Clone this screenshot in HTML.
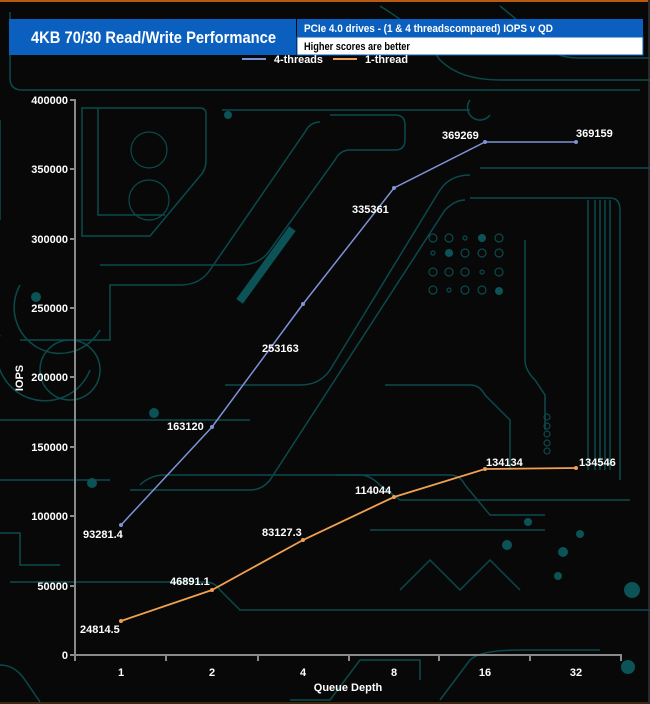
<!DOCTYPE html>
<html><head><meta charset="utf-8"><style>
html,body{margin:0;padding:0;background:#000}
svg{display:block}
text{font-family:"Liberation Sans",sans-serif;font-weight:bold}
</style></head><body>
<svg width="650" height="704" viewBox="0 0 650 704" xmlns="http://www.w3.org/2000/svg">
<rect width="650" height="704" fill="#080808"/>
<rect x="0" y="0" width="650" height="2" fill="#b85a10"/>
<rect x="0" y="702" width="650" height="2" fill="#3a2a10"/>
<rect x="648" y="0" width="2" height="704" fill="#2a2a2a"/>
<g fill="none" stroke="#0b4a4c" stroke-width="1.5">
<path d="M10 12 V78 Q10 90 22 90 H640"/>
<path d="M380 6 Q420 30 440 60 Q460 80 500 80 H650"/>
<path d="M500 6 Q530 30 550 50 Q560 58 580 58 H650"/>
<path d="M82 108 H200 Q206 108 206 114 V160 Q206 170 200 176 L150 236 H82 V108 Z"/>
<path d="M98 108 V215 H165"/>
<path d="M222 110 H470"/>
<path d="M330 115 H395 Q405 115 405 125 V140 Q405 150 395 150 H350 Q340 150 335 160 L270 250 Q260 265 240 265 H100"/>
<path d="M320 122 Q310 122 305 132 L210 270 Q200 285 180 285 H110 V340 H20"/>
<path d="M480 168 H650"/>
<path d="M470 175 Q450 175 440 190 L330 370 Q320 385 300 385 H225"/>
<path d="M465 200 Q455 200 445 210 L270 480 Q262 490 250 490 H130"/>
<path d="M470 198 H610 Q620 198 620 210 V480"/>
<path d="M595 200 V470 M600 200 V470 M605 200 V470 M610 200 V470 M588 200 V470"/>
<path d="M525 240 V360 Q525 370 535 380 L545 395 V430"/>
<path d="M385 385 H470 Q480 385 485 395 L510 420 V470"/>
<path d="M335 475 H450 Q460 475 465 485 L490 515 H545"/>
<path d="M370 530 H545"/>
<path d="M140 485 Q150 475 165 475 H360 Q370 475 380 485 L400 500 H630"/>
<path d="M0 533 H20 V565 H60"/>
<path d="M10 582 H205 Q215 582 220 590 L240 610 H650"/>
<path d="M0 665 Q15 665 25 680 L40 702"/>
<path d="M290 700 H330 L360 660 H420 V680"/>
<path d="M440 700 L470 660 Q480 650 520 650 H600"/>
<path d="M400 590 L430 560 L460 590 L490 560 L520 590"/>
<path d="M0 420 H250"/>
<path d="M0 480 H110"/>
<path d="M0 120 V220"/>
<path d="M70 340 A30 30 0 1 0 70 400 A30 30 0 1 0 70 340"/>
<path d="M20 285 A45 45 0 0 0 100 330"/>
<path d="M0 335 A48 48 0 0 0 90 370"/>
<path d="M490 115 A12 12 0 1 1 470 100"/>
</g>
<g fill="#0b5356">
<rect x="262" y="220" width="8" height="90" transform="rotate(36 266 265)"/>
<circle cx="228" cy="115" r="4"/><circle cx="154" cy="413" r="5"/><circle cx="92" cy="483" r="5"/>
<circle cx="482" cy="238" r="4"/><circle cx="449" cy="253" r="4"/><circle cx="499" cy="291" r="4"/>
<circle cx="632" cy="590" r="8"/><circle cx="628" cy="667" r="7"/>
<circle cx="507" cy="545" r="5"/><circle cx="563" cy="552" r="5"/><circle cx="558" cy="576" r="4"/><circle cx="528" cy="522" r="4"/><circle cx="580" cy="534" r="4"/>
<circle cx="36" cy="297" r="5"/>
</g>
<g fill="none" stroke="#0b4a4c" stroke-width="1.2">
<circle cx="433" cy="238" r="4"/><circle cx="449" cy="238" r="4"/><circle cx="465" cy="238" r="2"/><circle cx="499" cy="238" r="4"/>
<circle cx="433" cy="253" r="2"/><circle cx="465" cy="253" r="4"/><circle cx="482" cy="253" r="4"/><circle cx="499" cy="253" r="4"/>
<circle cx="433" cy="272" r="4"/><circle cx="449" cy="272" r="4"/><circle cx="465" cy="272" r="4"/><circle cx="482" cy="272" r="2"/><circle cx="499" cy="272" r="4"/>
<circle cx="433" cy="290" r="4"/><circle cx="449" cy="290" r="2"/><circle cx="465" cy="290" r="4"/><circle cx="482" cy="290" r="4"/>
<circle cx="547" cy="417" r="3"/><circle cx="547" cy="426" r="3"/><circle cx="547" cy="434" r="3"/><circle cx="547" cy="443" r="3"/><circle cx="547" cy="451" r="3"/>
<circle cx="149" cy="200" r="20"/><circle cx="149" cy="150" r="18"/>
</g>
<rect x="9" y="19" width="287" height="36" fill="#0a5fbf"/>
<text x="31" y="43" font-size="17" fill="#fff" textLength="245" lengthAdjust="spacingAndGlyphs">4KB 70/30 Read/Write Performance</text>
<rect x="297" y="19" width="346" height="18" fill="#0a5fbf"/>
<rect x="297" y="37" width="346" height="18" fill="#fff" stroke="#0a5fbf"/>
<text x="304" y="32" font-size="11" fill="#fff" textLength="249" lengthAdjust="spacingAndGlyphs">PCIe 4.0 drives - (1 &amp; 4 threadscompared) IOPS v QD</text>
<text x="304" y="50" font-size="11" fill="#000" textLength="106" lengthAdjust="spacingAndGlyphs">Higher scores are better</text>
<line x1="242" y1="59" x2="266" y2="59" stroke="#7d93d6" stroke-width="2"/>
<text x="274" y="63" font-size="11" fill="#fff" textLength="49" lengthAdjust="spacingAndGlyphs">4-threads</text>
<line x1="333" y1="59" x2="357" y2="59" stroke="#f0a050" stroke-width="2"/>
<text x="365" y="63" font-size="11" fill="#fff" textLength="43" lengthAdjust="spacingAndGlyphs">1-thread</text>
<g stroke="#8a8a8a" stroke-width="2" fill="none">
<path d="M70 100 H75 V655 H622"/>
<path d="M70 169 H75 M70 239 H75 M70 308 H75 M70 377 H75 M70 447 H75 M70 516 H75 M70 586 H75 M70 655 H75"/>
<path d="M75 655 V661 M166 655 V661 M258 655 V661 M349 655 V661 M439 655 V661 M530 655 V661 M621 655 V661"/>
</g>
<g font-size="11" fill="#fff" text-anchor="end">
<text x="68" y="104">400000</text><text x="68" y="173">350000</text><text x="68" y="243">300000</text><text x="68" y="312">250000</text>
<text x="68" y="381">200000</text><text x="68" y="451">150000</text><text x="68" y="520">100000</text><text x="68" y="590">50000</text><text x="68" y="659">0</text>
</g>
<g font-size="11" fill="#fff" text-anchor="middle">
<text x="121" y="676">1</text><text x="212" y="676">2</text><text x="303" y="676">4</text><text x="394" y="676">8</text><text x="485" y="676">16</text><text x="576" y="676">32</text>
<text x="348" y="691">Queue Depth</text>
</g>
<text transform="translate(23 378) rotate(-90)" font-size="11" fill="#fff" text-anchor="middle">IOPS</text>
<polyline points="121,525 212,427 303,304 394,188 485,142 576,142" fill="none" stroke="#7d93d6" stroke-width="1.5"/>
<polyline points="121,621 212,590 303,540 394,497 485,469 576,468" fill="none" stroke="#f0a050" stroke-width="1.8"/>
<g fill="#7d93d6"><circle cx="121" cy="525" r="2"/><circle cx="212" cy="427" r="2"/><circle cx="303" cy="304" r="2"/><circle cx="394" cy="188" r="2"/><circle cx="485" cy="142" r="2"/><circle cx="576" cy="142" r="2"/></g>
<g fill="#f0a050"><circle cx="121" cy="621" r="2"/><circle cx="212" cy="590" r="2"/><circle cx="303" cy="540" r="2"/><circle cx="394" cy="497" r="2"/><circle cx="485" cy="469" r="2"/><circle cx="576" cy="468" r="2"/></g>
<g font-size="11" fill="#fff">
<text x="83" y="538">93281.4</text><text x="167" y="430">163120</text><text x="262" y="352">253163</text><text x="352" y="213">335361</text><text x="442" y="139">369269</text><text x="576" y="137">369159</text>
<text x="80" y="633">24814.5</text><text x="170" y="585">46891.1</text><text x="262" y="536">83127.3</text><text x="355" y="494">114044</text><text x="486" y="466">134134</text><text x="579" y="466">134546</text>
</g>
</svg>
</body></html>
